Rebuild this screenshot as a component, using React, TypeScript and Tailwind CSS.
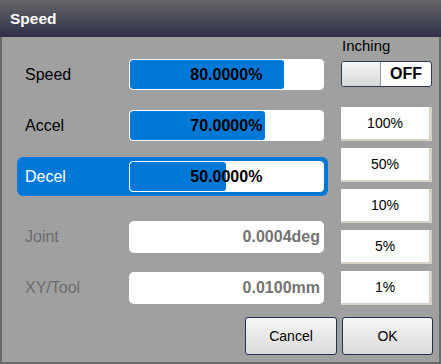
import React from "react";

const font = { fontFamily: '"Liberation Sans", Arial, sans-serif' };

function Bar({ pct, label }: { pct: number; label: string }) {
  return (
    <div className="relative w-[196px] h-[31px] bg-white border border-white rounded-[4px] overflow-hidden">
      <div className="absolute left-0 top-0 bottom-0 bg-[#0078d7] rounded-[3px]" style={{ width: `${pct}%` }} />
      <div className="absolute inset-0 flex items-center justify-center text-[16px] font-bold text-black">{label}</div>
    </div>
  );
}

function Row({ label, children, active, disabled, className = "" }: { label: string; children: React.ReactNode; active?: boolean; disabled?: boolean; className?: string }) {
  return (
    <div className={`h-[39px] flex items-center pl-[8px] pr-[4px] rounded-[6px] ${active ? "bg-[#0078d7]" : ""} ${className}`}>
      <div className={`w-[104px] text-[16px] ${active ? "text-white" : disabled ? "text-[#6c6c6c]" : "text-black"}`}>{label}</div>
      {children}
    </div>
  );
}

function Value({ text }: { text: string }) {
  return (
    <div className="w-[196px] h-[32px] bg-white rounded-[5px] flex items-center justify-end pr-[4px] text-[16px] font-bold text-[#737373]">{text}</div>
  );
}

function Preset({ text }: { text: string }) {
  return (
    <div className="h-[34px] bg-white border-r-[3px] border-b-2 border-[#d6d2c6] flex items-center justify-center text-[14px] text-black">{text}</div>
  );
}

export default function App() {
  return (
    <div className="w-[441px] h-[364px] flex flex-col bg-[#a0a0a0] overflow-hidden" style={font}>
      <div className="h-[37px] shrink-0 bg-linear-to-b from-[#676767] to-[#2f3048] flex items-center pl-[10px] text-white font-bold text-[15.5px]">
        Speed
      </div>
      <div className="flex-1 flex flex-col border-l-2 border-r-2 border-b-2 border-[#6a6a6a]">
        <div className="flex items-start">
          <div className="ml-[15px] w-[311px] pt-[18px] flex flex-col gap-[12px]">
            <Row label="Speed"><Bar pct={80} label="80.0000%" /></Row>
            <Row label="Accel"><Bar pct={70} label="70.0000%" /></Row>
            <Row label="Decel" active><Bar pct={50} label="50.0000%" /></Row>
            <Row label="Joint" disabled className="mt-[9px]"><Value text="0.0004deg" /></Row>
            <Row label="XY/Tool" disabled><Value text="0.0100mm" /></Row>
          </div>
          <div className="ml-[13px] w-[91px] flex flex-col">
            <div className="text-[15px] leading-[17px] text-black pl-px">Inching</div>
            <div className="mt-[7px] h-[26px] flex border border-[#2a3a52] rounded-[3px] overflow-hidden bg-white">
              <div className="w-[39px] bg-linear-to-b from-[#f6f6f6] to-[#d8d8d8] border-r border-[#9a9a9a]" />
              <div className="flex-1 flex items-center justify-center font-bold text-[16px] text-black">OFF</div>
            </div>
            <div className="mt-[20px] flex flex-col gap-[7px]">
              <Preset text="100%" />
              <Preset text="50%" />
              <Preset text="10%" />
              <Preset text="5%" />
              <Preset text="1%" />
            </div>
          </div>
        </div>
        <div className="mt-[10px] flex justify-end gap-[5px] pr-[6px]">
          <button className="w-[92px] h-[38px] rounded-[3px] border border-[#1d3452] bg-linear-to-b from-[#f7f7f7] to-[#dadada] text-[14px] text-black">Cancel</button>
          <button className="w-[91px] h-[38px] rounded-[3px] border border-[#1d3452] bg-linear-to-b from-[#f7f7f7] to-[#dadada] text-[14px] text-black">OK</button>
        </div>
      </div>
    </div>
  );
}
